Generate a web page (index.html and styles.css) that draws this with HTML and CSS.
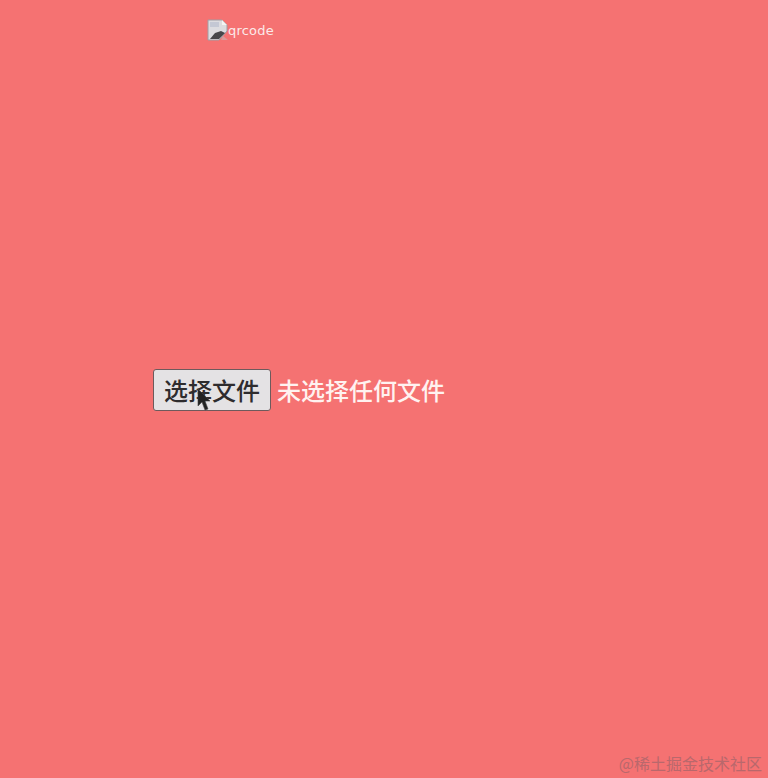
FILE: index.html
```html
<!DOCTYPE html>
<html lang="zh-CN">
<head>
    <meta charset="UTF-8">
    <title>qrcode</title>
    <link rel="stylesheet" href="styles.css">
</head>
<body>
    <div class="page">
        <div class="qr-image">
            <!-- broken image icon -->
            <svg class="broken-icon" width="22" height="22" viewBox="0 0 22 22">
                <path d="M1 1H15L20 6V12L12 21H1Z" fill="#dcdce0" stroke="#a09ea4"/>
                <path d="M3 3H12V8H3Z" fill="#c4c8d4"/>
                <path d="M15 1V6H20Z" fill="#f4f4f4"/>
                <path d="M3 20L8 14L14 12L18 14L12 20Z" fill="#46464a"/>
                <path d="M16 17L21 21H14Z" fill="#d99a9a"/>
            </svg>
            <span class="qr-alt">qrcode</span>
        </div>
        <div class="file-row">
            <div class="file-btn-wrap">
                <button class="file-btn">选择文件</button>
                <svg class="cursor" width="14" height="24" viewBox="0 0 14 24">
                    <path d="M1 1V18L5 14L8 22L11 21L8 13H13Z" fill="#222" stroke="#444" stroke-width="0.6"/>
                </svg>
            </div>
            <span class="file-name">未选择任何文件</span>
        </div>
    </div>
    <div class="watermark">@稀土掘金技术社区</div>
</body>
</html>
```

FILE: styles.css
```css
body {
    margin: 0;
    height: 778px;
    overflow: hidden;
    background-color: #f57272;
    font-family: "Noto Sans CJK SC", "Liberation Sans", sans-serif;
}
.page {
    display: flex;
    flex-direction: column;
    padding: 19px 0 0 153px;
}
.qr-image {
    display: flex;
    align-items: center;
    height: 22px;
    margin-left: 54px;
}
.broken-icon {
    flex-shrink: 0;
}
.qr-alt {
    margin-left: -1px;
    font-family: "DejaVu Sans", sans-serif;
    font-size: 13px;
    font-weight: 500;
    letter-spacing: 0.2px;
    color: #fbeaea;
}
.file-row {
    display: flex;
    align-items: center;
    gap: 6px;
    margin-top: 328px;
}
.file-btn-wrap {
    position: relative;
    display: flex;
}
.file-btn {
    width: 118px;
    height: 42px;
    padding: 0;
    font-family: inherit;
    font-size: 24px;
    font-weight: 500;
    line-height: 1;
    color: #2e2c2e;
    background-color: #e4e2e4;
    border: 1.5px solid #6e5a5c;
    border-radius: 3px;
}
.cursor {
    position: absolute;
    left: 44px;
    top: 19px;
}
.file-name {
    font-size: 24px;
    font-weight: 500;
    line-height: 1;
    color: #fff2f0;
}
.watermark {
    position: absolute;
    right: 6px;
    bottom: 5px;
    font-size: 16px;
    line-height: 20px;
    color: #b9686c;
}
```
